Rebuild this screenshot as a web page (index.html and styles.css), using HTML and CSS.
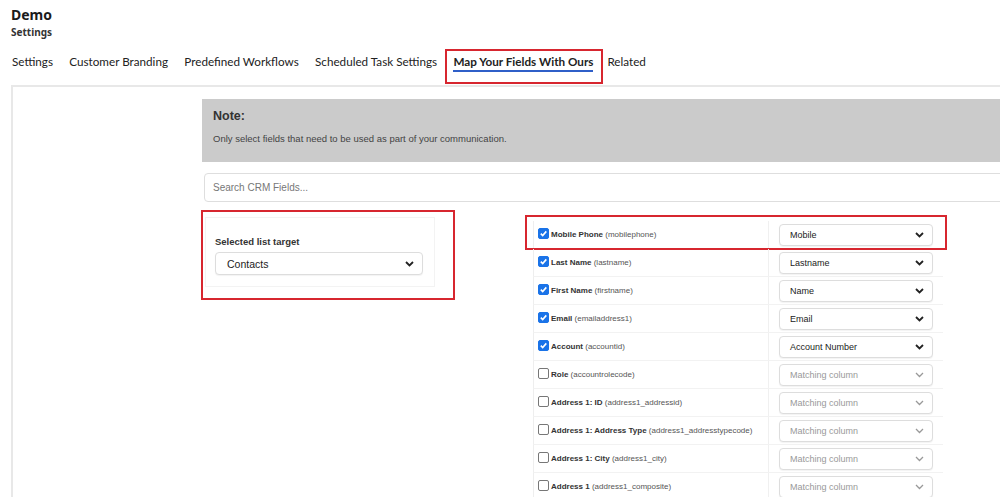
FILE: index.html
```html
<!DOCTYPE html>
<html>
<head>
<meta charset="utf-8">
<link rel="stylesheet" href="styles.css">
</head>
<body>
<header class="head">
  <div class="title">Demo</div>
  <div class="subtitle">Settings</div>
</header>
<nav class="tabs">
  <span class="tab">Settings</span>
  <span class="tab">Customer Branding</span>
  <span class="tab">Predefined Workflows</span>
  <span class="tab">Scheduled Task Settings</span>
  <span class="tab active"><span class="tab-label">Map Your Fields With Ours</span></span>
  <span class="tab">Related</span>
</nav>
<main class="panel">
  <div class="content">
    <div class="note">
      <div class="note-title">Note:</div>
      <div class="note-text">Only select fields that need to be used as part of your communication.</div>
    </div>
    <div class="search">Search CRM Fields...</div>
    <div class="lower">
      <div class="target-box">
        <div class="target-card">
          <div class="target-label">Selected list target</div>
          <div class="select big"><span>Contacts</span><svg class="chev" width="9" height="6" viewBox="0 0 9 6"><path d="M1 1 L4.5 4.5 L8 1" fill="none" stroke="#222" stroke-width="1.8"/></svg></div>
        </div>
      </div>
      <div class="fields">
        <div class="row highlighted">
          <div class="cell-l"><span class="cb on"><svg width="9" height="9" viewBox="0 0 9 9"><path d="M1.8 4.6 L3.7 6.5 L7.3 2.4" fill="none" stroke="#fff" stroke-width="1.6"/></svg></span><b>Mobile Phone</b>&nbsp;(mobilephone)</div>
          <div class="cell-r"><div class="select"><span>Mobile</span><svg class="chev" width="9" height="6" viewBox="0 0 9 6"><path d="M1 1 L4.5 4.5 L8 1" fill="none" stroke="#222" stroke-width="1.8"/></svg></div></div>
          <span class="mark"></span>
        </div>
        <div class="row">
          <div class="cell-l"><span class="cb on"><svg width="9" height="9" viewBox="0 0 9 9"><path d="M1.8 4.6 L3.7 6.5 L7.3 2.4" fill="none" stroke="#fff" stroke-width="1.6"/></svg></span><b>Last Name</b>&nbsp;(lastname)</div>
          <div class="cell-r"><div class="select"><span>Lastname</span><svg class="chev" width="9" height="6" viewBox="0 0 9 6"><path d="M1 1 L4.5 4.5 L8 1" fill="none" stroke="#222" stroke-width="1.8"/></svg></div></div>
        </div>
        <div class="row">
          <div class="cell-l"><span class="cb on"><svg width="9" height="9" viewBox="0 0 9 9"><path d="M1.8 4.6 L3.7 6.5 L7.3 2.4" fill="none" stroke="#fff" stroke-width="1.6"/></svg></span><b>First Name</b>&nbsp;(firstname)</div>
          <div class="cell-r"><div class="select"><span>Name</span><svg class="chev" width="9" height="6" viewBox="0 0 9 6"><path d="M1 1 L4.5 4.5 L8 1" fill="none" stroke="#222" stroke-width="1.8"/></svg></div></div>
        </div>
        <div class="row">
          <div class="cell-l"><span class="cb on"><svg width="9" height="9" viewBox="0 0 9 9"><path d="M1.8 4.6 L3.7 6.5 L7.3 2.4" fill="none" stroke="#fff" stroke-width="1.6"/></svg></span><b>Email</b>&nbsp;(emailaddress1)</div>
          <div class="cell-r"><div class="select"><span>Email</span><svg class="chev" width="9" height="6" viewBox="0 0 9 6"><path d="M1 1 L4.5 4.5 L8 1" fill="none" stroke="#222" stroke-width="1.8"/></svg></div></div>
        </div>
        <div class="row">
          <div class="cell-l"><span class="cb on"><svg width="9" height="9" viewBox="0 0 9 9"><path d="M1.8 4.6 L3.7 6.5 L7.3 2.4" fill="none" stroke="#fff" stroke-width="1.6"/></svg></span><b>Account</b>&nbsp;(accountid)</div>
          <div class="cell-r"><div class="select"><span>Account Number</span><svg class="chev" width="9" height="6" viewBox="0 0 9 6"><path d="M1 1 L4.5 4.5 L8 1" fill="none" stroke="#222" stroke-width="1.8"/></svg></div></div>
        </div>
        <div class="row">
          <div class="cell-l"><span class="cb"></span><b>Role</b>&nbsp;(accountrolecode)</div>
          <div class="cell-r"><div class="select empty"><span>Matching column</span><svg class="chev" width="9" height="6" viewBox="0 0 9 6"><path d="M1 1 L4.5 4.5 L8 1" fill="none" stroke="#999" stroke-width="1.3"/></svg></div></div>
        </div>
        <div class="row">
          <div class="cell-l"><span class="cb"></span><b>Address 1: ID</b>&nbsp;(address1_addressid)</div>
          <div class="cell-r"><div class="select empty"><span>Matching column</span><svg class="chev" width="9" height="6" viewBox="0 0 9 6"><path d="M1 1 L4.5 4.5 L8 1" fill="none" stroke="#999" stroke-width="1.3"/></svg></div></div>
        </div>
        <div class="row">
          <div class="cell-l"><span class="cb"></span><b>Address 1: Address Type</b>&nbsp;(address1_addresstypecode)</div>
          <div class="cell-r"><div class="select empty"><span>Matching column</span><svg class="chev" width="9" height="6" viewBox="0 0 9 6"><path d="M1 1 L4.5 4.5 L8 1" fill="none" stroke="#999" stroke-width="1.3"/></svg></div></div>
        </div>
        <div class="row">
          <div class="cell-l"><span class="cb"></span><b>Address 1: City</b>&nbsp;(address1_city)</div>
          <div class="cell-r"><div class="select empty"><span>Matching column</span><svg class="chev" width="9" height="6" viewBox="0 0 9 6"><path d="M1 1 L4.5 4.5 L8 1" fill="none" stroke="#999" stroke-width="1.3"/></svg></div></div>
        </div>
        <div class="row">
          <div class="cell-l"><span class="cb"></span><b>Address 1</b>&nbsp;(address1_composite)</div>
          <div class="cell-r"><div class="select empty"><span>Matching column</span><svg class="chev" width="9" height="6" viewBox="0 0 9 6"><path d="M1 1 L4.5 4.5 L8 1" fill="none" stroke="#999" stroke-width="1.3"/></svg></div></div>
        </div>
      </div>
    </div>
  </div>
</main>
</body>
</html>
```
FILE: styles.css
```css
html, body {
  margin: 0;
  padding: 0;
  background: #fff;
  overflow: hidden;
  width: 1000px;
  height: 497px;
}
body {
  font-family: "Noto Sans", "Open Sans", sans-serif;
  color: #222;
}
.head {
  padding: 6px 0 0 11px;
  height: 43px;
  box-sizing: border-box;
}
.title {
  font-size: 14px;
  font-weight: 700;
  line-height: 18px;
  color: #1b1b1b;
}
.subtitle {
  font-size: 10px;
  font-weight: 700;
  line-height: 14px;
  color: #333;
  margin-top: 1px;
}
.tabs {
  display: flex;
  align-items: flex-start;
  height: 36px;
  margin-top: 6px;
  padding-left: 12px;
  font-family: "Lato", "Noto Sans", sans-serif;
  font-size: 11.7px;
  line-height: 16px;
  color: #222;
}
.tab {
  margin-right: 16.3px;
  white-space: nowrap;
  padding-top: 4px;
}
.tab.active {
  border: 2px solid #d7262f;
  height: 35px;
  box-sizing: border-box;
  display: flex;
  align-items: flex-start;
  padding: 2px 8px 0 6px;
  margin-left: -8px;
  margin-right: 4px;
  font-weight: 700;
}
.tab-label {
  border-bottom: 2px solid #2f5fc8;
  line-height: 17px;
}
.panel {
  margin-left: 11px;
  margin-top: 0;
  border-top: 2px solid #e8e8e8;
  border-left: 2px solid #e8e8e8;
  height: 420px;
}
.content {
  padding: 12px 0 0 189px;
  width: 840px;
}
.note {
  background: #cbcbcb;
  height: 63px;
  box-sizing: border-box;
  padding: 9px 11px;
  font-family: "Liberation Sans", Arial, sans-serif;
}
.note-title {
  font-size: 12.5px;
  font-weight: 700;
  color: #333;
  line-height: 16px;
}
.note-text {
  font-size: 9.5px;
  color: #444;
  margin-top: 9px;
}
.search {
  margin: 11px 0 0 2px;
  height: 29px;
  box-sizing: border-box;
  border: 1px solid #dedede;
  border-radius: 4px;
  padding: 0 8px;
  display: flex;
  align-items: center;
  font-family: "Liberation Sans", Arial, sans-serif;
  font-size: 10px;
  color: #777;
}
.lower {
  display: flex;
  align-items: flex-start;
  margin-top: 8px;
}
.target-box {
  width: 254px;
  height: 90px;
  box-sizing: border-box;
  border: 2px solid #d7262f;
  margin-left: -1px;
  padding: 5px 0 0 2px;
  flex: none;
}
.target-card {
  width: 230px;
  height: 70px;
  box-sizing: border-box;
  border: 1px solid #f3f3f3;
  padding: 18px 11px 0 9px;
  font-family: "Liberation Sans", Arial, sans-serif;
}
.target-label {
  font-size: 9.5px;
  font-weight: 700;
  color: #333;
  line-height: 12px;
}
.select {
  height: 22px;
  box-sizing: border-box;
  border: 1px solid #ddd;
  border-radius: 4px;
  box-shadow: 0 1px 1px rgba(0,0,0,0.05);
  display: flex;
  align-items: center;
  justify-content: space-between;
  padding: 0 8px 0 10px;
  font-family: "Liberation Sans", Arial, sans-serif;
  font-size: 9px;
  color: #222;
  background: #fff;
}
.select.big {
  height: 23px;
  margin-top: 4px;
  font-size: 10.5px;
  padding-left: 11px;
}
.select.empty {
  color: #999;
}
.chev {
  flex: none;
}
.fields {
  margin-left: 78px;
  margin-top: 11px;
  width: 410px;
  flex: none;
}
.row {
  position: relative;
  display: grid;
  grid-template-columns: 235px 1fr;
  height: 28px;
  border-left: 1px solid #eee;
  border-bottom: 1px solid #f2f2f2;
  box-sizing: border-box;
  font-family: "Liberation Sans", Arial, sans-serif;
  font-size: 8px;
  color: #555;
}
.cell-l {
  display: flex;
  align-items: center;
  padding-left: 4px;
  border-right: 1px solid #f0f0f0;
  white-space: nowrap;
}
.cell-l b {
  font-weight: 700;
  color: #333;
}
.cell-r {
  display: flex;
  align-items: center;
  padding-left: 10px;
  padding-right: 9px;
}
.cell-r .select {
  width: 154px;
}
.cb {
  width: 11px;
  height: 11px;
  box-sizing: border-box;
  border: 1px solid #777;
  border-radius: 2px;
  margin-right: 2px;
  display: inline-flex;
  align-items: center;
  justify-content: center;
  flex: none;
  margin-top: -3px;
}
.cb.on {
  background: #1a73e8;
  border-color: #1a73e8;
}
.mark {
  position: absolute;
  left: -9px;
  top: -6px;
  width: 422px;
  height: 35px;
  border: 2px solid #d7262f;
  box-sizing: border-box;
  pointer-events: none;
}
```
